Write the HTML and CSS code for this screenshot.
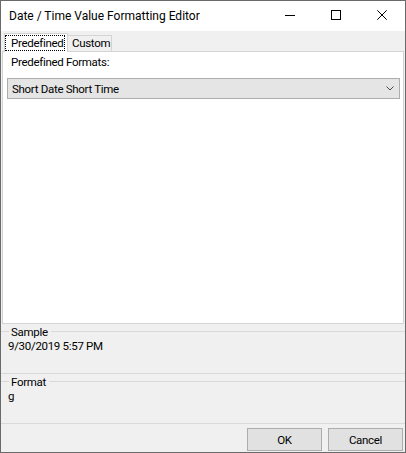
FILE: index.html
```html
<!DOCTYPE html>
<html>
<head>
<meta charset="utf-8">
<link rel="stylesheet" href="styles.css">
</head>
<body>
<div class="window">
  <div class="titlebar">
    <span class="title">Date / Time Value Formatting Editor</span>
    <div class="controls">
      <div class="ctl"><svg width="10" height="10" viewBox="0 0 10 10"><path d="M0 5.5H10" stroke="#000" stroke-width="1"/></svg></div>
      <div class="ctl"><svg width="10" height="10" viewBox="0 0 10 10"><rect x="0.5" y="0.5" width="9" height="9" fill="none" stroke="#000" stroke-width="1"/></svg></div>
      <div class="ctl"><svg width="10" height="10" viewBox="0 0 10 10"><path d="M0.3 0.3L9.7 9.7M9.7 0.3L0.3 9.7" stroke="#000" stroke-width="1"/></svg></div>
    </div>
  </div>
  <div class="content">
    <div class="tabs">
      <div class="tab active"><span class="focus">Predefined</span></div>
      <div class="tab">Custom</div>
    </div>
    <div class="page">
      <div class="label">Predefined Formats:</div>
      <div class="combo">
        <span>Short Date Short Time</span>
        <svg class="chev" width="8" height="5" viewBox="0 0 8 5"><path d="M0.5 0.5L4 4L7.5 0.5" fill="none" stroke="#4a4a4a" stroke-width="1"/></svg>
      </div>
    </div>
    <section class="group">
      <div class="group-head"><span class="rule short"></span><span class="group-title">Sample</span><span class="rule"></span></div>
      <div class="value">9/30/2019 5:57 PM</div>
    </section>
    <section class="group">
      <div class="group-head"><span class="rule short"></span><span class="group-title">Format</span><span class="rule"></span></div>
      <div class="value">g</div>
    </section>
    <div class="buttons">
      <button class="btn">OK</button>
      <button class="btn">Cancel</button>
    </div>
  </div>
</div>
</body>
</html>
```

FILE: styles.css
```css
html, body {
  margin: 0;
  padding: 0;
  background: #ffffff;
}
body {
  font-family: Roboto, "Liberation Sans", sans-serif;
  font-size: 11.5px;
  letter-spacing: -0.3px;
  color: #000;
}
.window {
  width: 406px;
  height: 453px;
  box-sizing: border-box;
  border: 1px solid #6a6a6a;
  display: flex;
  flex-direction: column;
  background: #f0f0f0;
}
.titlebar {
  height: 30px;
  flex: none;
  background: #ffffff;
  display: flex;
  justify-content: space-between;
}
.title {
  padding-left: 8px;
  line-height: 30px;
  font-size: 12px;
  letter-spacing: 0;
}
.controls {
  display: flex;
}
.ctl {
  width: 46px;
  height: 30px;
  display: flex;
  justify-content: center;
  align-items: flex-start;
  padding-top: 9px;
  box-sizing: border-box;
}
.ctl svg {
  display: block;
}
.content {
  flex: 1;
  display: flex;
  flex-direction: column;
  background: #f0f0f0;
}
.tabs {
  height: 20px;
  flex: none;
  display: flex;
  align-items: flex-end;
  padding-left: 3px;
}
.tab {
  box-sizing: border-box;
  border: 1px solid #d4d4d4;
  border-bottom: 0;
  height: 16px;
  width: 45px;
  margin-left: -1px;
  line-height: 15px;
  padding-left: 4px;
  background: #f0f0f0;
}
.tab.active {
  position: relative;
  z-index: 1;
  width: 64px;
  height: 19px;
  margin-left: 0;
  margin-bottom: -1px;
  background: #ffffff;
  padding: 1px 2px 0 0;
}
.focus {
  display: block;
  border: 1px dotted #000;
  height: 16px;
  line-height: 14px;
  padding-left: 5px;
  box-sizing: border-box;
}
.page {
  height: 273px;
  flex: none;
  box-sizing: border-box;
  margin: 0 1px;
  border: 1px solid #d4d4d4;
  background: #ffffff;
}
.label {
  margin-top: 3px;
  padding-left: 8px;
  line-height: 15px;
}
.combo {
  margin: 8px 3px 0 4px;
  height: 21px;
  box-sizing: border-box;
  border: 1px solid #adadad;
  background: #e5e5e5;
  display: flex;
  align-items: center;
  justify-content: space-between;
  padding: 0 5px 0 4px;
}
.chev {
  display: block;
}
.group {
  flex: none;
  border-bottom: 1px solid #d9d9d9;
}
.group-head {
  height: 15px;
  display: flex;
  align-items: center;
}
.rule {
  flex: 1;
  height: 1px;
  background: #d9d9d9;
}
.rule.short {
  flex: none;
  width: 8px;
}
.group-title {
  padding: 2px 3px 0 2px;
  line-height: 13px;
}
.value {
  height: 34px;
  box-sizing: border-box;
  padding-left: 7px;
  line-height: 15px;
}
.buttons {
  display: flex;
  justify-content: flex-end;
  gap: 6px;
  padding: 4px 2px 0 0;
}
.btn {
  width: 75px;
  height: 23px;
  box-sizing: border-box;
  margin: 0;
  padding: 0;
  border: 1px solid #adadad;
  background: #e1e1e1;
  font-family: Roboto, "Liberation Sans", sans-serif;
  font-size: 11.5px;
  letter-spacing: -0.3px;
  color: #000;
}
```
